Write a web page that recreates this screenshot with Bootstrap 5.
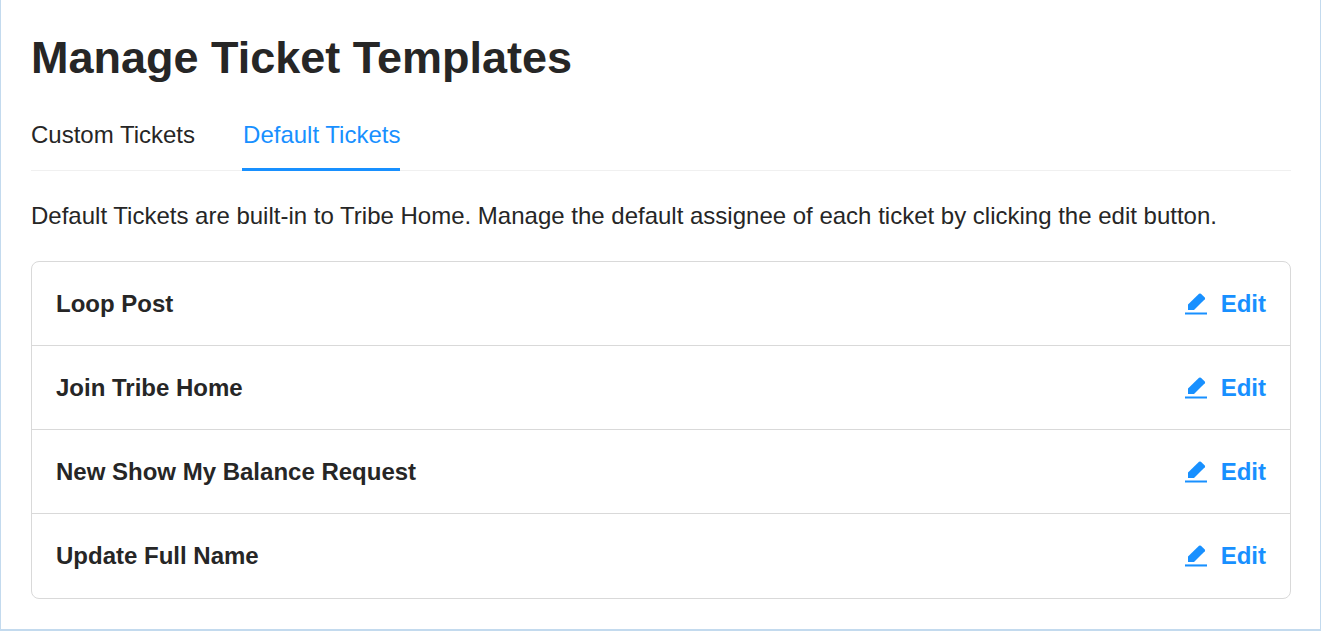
<!DOCTYPE html>
<html lang="en">
<head>
<meta charset="utf-8">
<title>Manage Ticket Templates</title>
<link href="https://cdn.jsdelivr.net/npm/bootstrap@5.3.0/dist/css/bootstrap.min.css" rel="stylesheet">
<style>
html, body { height: 100%; }
body { font-family: "Liberation Sans", Arial, sans-serif; color: #262626; background: #fff; overflow: hidden; }
.page-frame { height: 631px; border: 1px solid #c3daee; border-top: 0; border-bottom-width: 2px; padding: 0 29px 0 30px; }
.page-title { font-size: 45px; font-weight: 700; line-height: 50px; margin: 0; padding-top: 33px; color: #262626; }
.tab-strip { border-bottom: 1px solid #f0f0f0; gap: 47px; height: 88px; padding-top: 28px; }
.tab-item { font-size: 24px; line-height: 48px; height: 60px; color: #262626; text-decoration: none; }
.tab-item.is-active { color: #1890ff; border-bottom: 3px solid #1890ff; padding: 0 0 0 1px; }
.tab-intro { font-size: 24px; line-height: 30px; margin: 30px 0 30px; color: #262626; }
.ticket-list { border: 1px solid #d9d9d9; border-radius: 8px; overflow: hidden; }
.ticket-row { height: 84px; padding: 0 24px; border-bottom: 1px solid #d9d9d9; }
.ticket-row:last-child { border-bottom: 0; }
.ticket-name { font-size: 24px; font-weight: 700; color: #262626; }
.ticket-edit { font-size: 24px; font-weight: 700; color: #1890ff; text-decoration: none; gap: 14px; }
</style>
</head>
<body>
<div class="page-frame">
  <h1 class="page-title">Manage Ticket Templates</h1>
  <div class="tab-strip d-flex align-items-start">
    <a class="tab-item" href="#">Custom Tickets</a>
    <a class="tab-item is-active" href="#">Default Tickets</a>
  </div>
  <p class="tab-intro">Default Tickets are built-in to Tribe Home. Manage the default assignee of each ticket by clicking the edit button.</p>
  <div class="ticket-list">
    <div class="ticket-row d-flex align-items-center justify-content-between">
      <span class="ticket-name">Loop Post</span>
      <a class="ticket-edit d-flex align-items-center" href="#"><svg width="22" height="22" viewBox="0 0 22 22" fill="#1890ff"><path d="M0 19.4h22v2.1H0z"/><path d="M3 17V11.6L14 .8Q15 0 15.9.8L19.8 4.6Q20.4 5.4 19.8 6.2L9 17z"/></svg>Edit</a>
    </div>
    <div class="ticket-row d-flex align-items-center justify-content-between">
      <span class="ticket-name">Join Tribe Home</span>
      <a class="ticket-edit d-flex align-items-center" href="#"><svg width="22" height="22" viewBox="0 0 22 22" fill="#1890ff"><path d="M0 19.4h22v2.1H0z"/><path d="M3 17V11.6L14 .8Q15 0 15.9.8L19.8 4.6Q20.4 5.4 19.8 6.2L9 17z"/></svg>Edit</a>
    </div>
    <div class="ticket-row d-flex align-items-center justify-content-between">
      <span class="ticket-name">New Show My Balance Request</span>
      <a class="ticket-edit d-flex align-items-center" href="#"><svg width="22" height="22" viewBox="0 0 22 22" fill="#1890ff"><path d="M0 19.4h22v2.1H0z"/><path d="M3 17V11.6L14 .8Q15 0 15.9.8L19.8 4.6Q20.4 5.4 19.8 6.2L9 17z"/></svg>Edit</a>
    </div>
    <div class="ticket-row d-flex align-items-center justify-content-between">
      <span class="ticket-name">Update Full Name</span>
      <a class="ticket-edit d-flex align-items-center" href="#"><svg width="22" height="22" viewBox="0 0 22 22" fill="#1890ff"><path d="M0 19.4h22v2.1H0z"/><path d="M3 17V11.6L14 .8Q15 0 15.9.8L19.8 4.6Q20.4 5.4 19.8 6.2L9 17z"/></svg>Edit</a>
    </div>
  </div>
</div>
<script src="https://cdn.jsdelivr.net/npm/bootstrap@5.3.0/dist/js/bootstrap.bundle.min.js"></script>
</body>
</html>
